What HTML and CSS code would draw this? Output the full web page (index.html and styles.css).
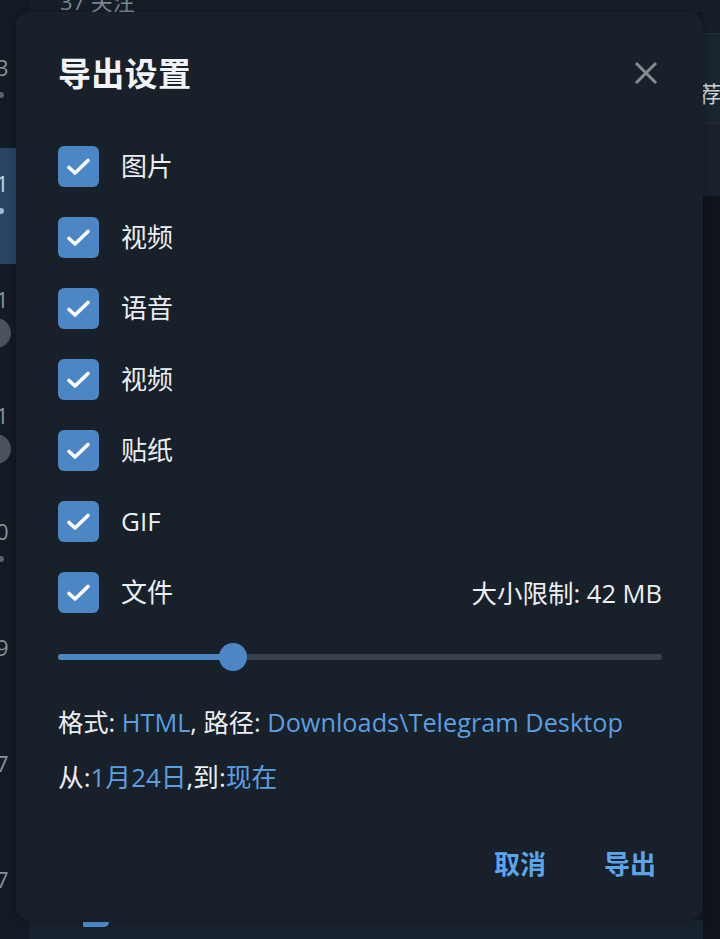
FILE: index.html
```html
<!DOCTYPE html>
<html lang="zh">
<head>
<meta charset="utf-8">
<link rel="stylesheet" href="styles.css">
</head>
<body>
<div class="app">
  <aside class="chats">
    <div class="chat-top"></div>
    <div class="chat"><span class="num">3</span><span class="dot"></span></div>
    <div class="chat active"><span class="num">1</span><span class="dot"></span></div>
    <div class="chat"><span class="num">1</span><span class="badge"></span></div>
    <div class="chat"><span class="num">1</span><span class="badge"></span></div>
    <div class="chat"><span class="num">0</span><span class="dot"></span></div>
    <div class="chat"><span class="num">9</span></div>
    <div class="chat"><span class="num">7</span></div>
    <div class="chat"><span class="num">7</span></div>
  </aside>
  <main class="main">
    <div class="main-head"><span class="subs">37 关注</span></div>
    <div class="main-body"></div>
    <div class="main-foot"><span class="foot-icon"></span></div>
  </main>
  <aside class="side">
    <div class="side-gap"></div>
    <div class="side-head"><span class="side-text">荐</span></div>
    <div class="side-sub"></div>
    <div class="side-body"></div>
  </aside>
</div>

<div class="dialog">
  <div class="dlg-head">
    <h1 class="dlg-title">导出设置</h1>
    <svg class="close" viewBox="0 0 24 24" width="24" height="24"><path d="M2 2L22 22M22 2L2 22" stroke="#868c93" stroke-width="3" stroke-linecap="butt"/></svg>
  </div>
  <div class="options">
    <label class="opt"><span class="box"><svg viewBox="0 0 41 41" width="41" height="41"><path d="M11 21.5L17 27L30 14.5" fill="none" stroke="#fff" stroke-width="3.6" stroke-linecap="round" stroke-linejoin="round"/></svg></span><span class="lbl">图片</span></label>
    <label class="opt"><span class="box"><svg viewBox="0 0 41 41" width="41" height="41"><path d="M11 21.5L17 27L30 14.5" fill="none" stroke="#fff" stroke-width="3.6" stroke-linecap="round" stroke-linejoin="round"/></svg></span><span class="lbl">视频</span></label>
    <label class="opt"><span class="box"><svg viewBox="0 0 41 41" width="41" height="41"><path d="M11 21.5L17 27L30 14.5" fill="none" stroke="#fff" stroke-width="3.6" stroke-linecap="round" stroke-linejoin="round"/></svg></span><span class="lbl">语音</span></label>
    <label class="opt"><span class="box"><svg viewBox="0 0 41 41" width="41" height="41"><path d="M11 21.5L17 27L30 14.5" fill="none" stroke="#fff" stroke-width="3.6" stroke-linecap="round" stroke-linejoin="round"/></svg></span><span class="lbl">视频</span></label>
    <label class="opt"><span class="box"><svg viewBox="0 0 41 41" width="41" height="41"><path d="M11 21.5L17 27L30 14.5" fill="none" stroke="#fff" stroke-width="3.6" stroke-linecap="round" stroke-linejoin="round"/></svg></span><span class="lbl">贴纸</span></label>
    <label class="opt"><span class="box"><svg viewBox="0 0 41 41" width="41" height="41"><path d="M11 21.5L17 27L30 14.5" fill="none" stroke="#fff" stroke-width="3.6" stroke-linecap="round" stroke-linejoin="round"/></svg></span><span class="lbl">GIF</span></label>
    <label class="opt"><span class="box"><svg viewBox="0 0 41 41" width="41" height="41"><path d="M11 21.5L17 27L30 14.5" fill="none" stroke="#fff" stroke-width="3.6" stroke-linecap="round" stroke-linejoin="round"/></svg></span><span class="lbl">文件</span><span class="limit">大小限制: 42 MB</span></label>
  </div>
  <div class="slider">
    <div class="track"><div class="fill" style="width: 29%"></div><div class="knob" style="left: 29%"></div></div>
  </div>
  <p class="info">格式: <span class="link">HTML</span>, 路径: <span class="link">Downloads\Telegram Desktop</span></p>
  <p class="info range">从:<span class="link">1月24日</span>,到:<span class="link">现在</span></p>
  <div class="actions">
    <button class="btn">取消</button>
    <button class="btn">导出</button>
  </div>
</div>
</body>
</html>
```

FILE: styles.css
```css
* { box-sizing: border-box; }
html, body { margin: 0; padding: 0; }
body {
  width: 720px;
  height: 939px;
  overflow: hidden;
  position: relative;
  background: #121921;
  font-family: "Open Sans", "Noto Sans CJK SC", sans-serif;
  color: #e9ecef;
}

/* dimmed background application */
.app {
  display: flex;
  height: 939px;
}
.chats {
  width: 29px;
  flex: none;
  display: flex;
  flex-direction: column;
  background: #141b24;
  border-right: 1px solid #10161d;
  overflow: hidden;
}
.chat-top { height: 32px; flex: none; }
.chat {
  height: 116px;
  flex: none;
  display: flex;
  flex-direction: column;
  align-items: flex-start;
  padding-top: 22px;
  padding-left: 1px;
  position: relative;
}
.chat.active { background: #284565; }
.num {
  font-size: 22px;
  line-height: 26px;
  color: #8a939d;
  margin-left: -5px;
}
.chat.active .num { color: #c9d6e3; }
.dot {
  width: 6px;
  height: 6px;
  border-radius: 3px;
  background: #55606c;
  margin-top: 12px;
  margin-left: -3px;
}
.chat.active .dot { background: #9fb6cc; }
.badge {
  width: 30px;
  height: 30px;
  border-radius: 50%;
  background: #4a5460;
  margin-top: 6px;
  margin-left: -20px;
}
.main {
  flex: 1;
  display: flex;
  flex-direction: column;
  background: #131a22;
}
.main-head {
  height: 14px;
  flex: none;
  background: #161e28;
  border-bottom: 1px solid #10161d;
  overflow: hidden;
  padding-left: 31px;
}
.subs {
  display: block;
  font-size: 22px;
  line-height: 22px;
  margin-top: -10px;
  color: #7d8893;
}
.main-body { flex: 1; }
.main-foot {
  height: 19px;
  flex: none;
  background: #18222e;
  padding-left: 54px;
}
.foot-icon {
  display: block;
  width: 26px;
  height: 5px;
  margin-top: 2px;
  border-radius: 0 0 10px 3px;
  background: #4a8fd0;
}
.side {
  width: 17px;
  flex: none;
  display: flex;
  flex-direction: column;
}
.side-gap { height: 33px; background: #161e28; }
.side-head {
  height: 90px;
  background: #1b2531;
  border-top: 1px solid #222d3a;
  overflow: hidden;
  padding-top: 46px;
}
.side-text {
  display: block;
  font-size: 22px;
  line-height: 26px;
  color: #cfd5db;
  margin-left: -4px;
}
.side-sub { height: 73px; background: #19222e; border-top: 1px solid #222d3a; }
.side-body { flex: 1; background: #0f141b; }

/* modal dialog */
.dialog {
  position: absolute;
  left: 16px;
  top: 12px;
  width: 687px;
  height: 908px;
  background: #18202a;
  border-radius: 14px;
  padding: 42px 41px 0 42px;
  display: flex;
  flex-direction: column;
  box-shadow: 0 0 12px rgba(0, 0, 0, 0.25);
}
.dlg-head {
  display: flex;
  justify-content: space-between;
  align-items: center;
  height: 40px;
}
.dlg-title {
  margin: 0;
  font-size: 33px;
  font-weight: 700;
  line-height: 40px;
  color: #f1f3f5;
  letter-spacing: 0.3px;
}
.close { margin-right: 4px; margin-top: -2px; }
.options {
  display: flex;
  flex-direction: column;
  gap: 30px;
  margin-top: 52px;
}
.opt {
  display: flex;
  align-items: center;
  height: 41px;
}
.box {
  width: 41px;
  height: 41px;
  border-radius: 6px;
  background: #4d86c4;
  display: block;
  flex: none;
}
.box svg { display: block; }
.lbl {
  margin-left: 22px;
  font-size: 26px;
  line-height: 30px;
  color: #eceff2;
  margin-top: -2px;
}
.limit {
  margin-left: auto;
  font-size: 25.5px;
  line-height: 30px;
  color: #eceff2;
}
.slider {
  margin-top: 29px;
  height: 30px;
  display: flex;
  align-items: center;
}
.track {
  position: relative;
  width: 100%;
  height: 6px;
  border-radius: 3px;
  background: #38424e;
}
.fill {
  height: 6px;
  border-radius: 3px;
  background: #4d86c4;
}
.knob {
  position: absolute;
  top: 50%;
  width: 28px;
  height: 28px;
  border-radius: 50%;
  background: #4d86c4;
  transform: translate(-50%, -50%);
}
.info {
  margin: 34px 0 0;
  font-size: 25.3px;
  line-height: 32px;
  color: #eceff2;
}
.info.range { margin-top: 23px; font-size: 25.8px; }
.link { color: #5a9fe0; }
.actions {
  margin-top: auto;
  margin-bottom: 40px;
  display: flex;
  justify-content: flex-end;
  gap: 58px;
  padding-right: 6px;
}
.btn {
  background: none;
  border: none;
  padding: 0;
  font-family: "Open Sans", "Noto Sans CJK SC", sans-serif;
  font-size: 26px;
  font-weight: 700;
  line-height: 32px;
  color: #5ba5ea;
}
```
